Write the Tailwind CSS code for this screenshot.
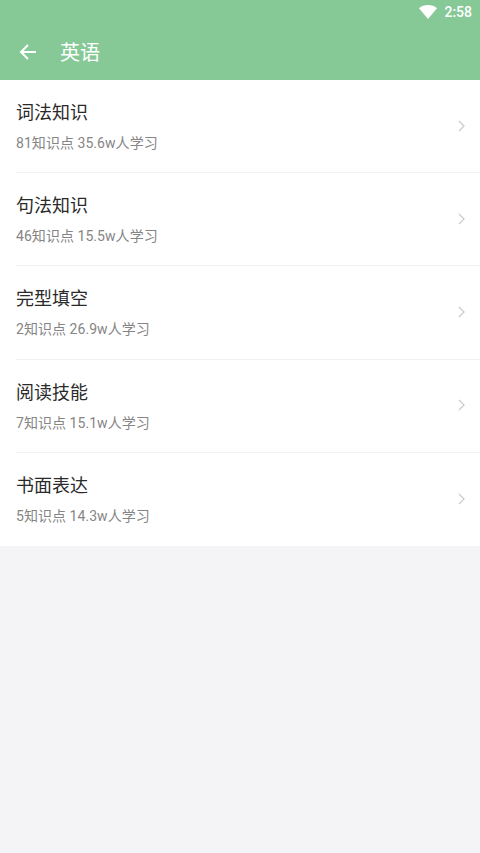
<!DOCTYPE html>
<html lang="zh-CN">
<head>
    <meta charset="UTF-8">
    <meta name="viewport" content="width=device-width, initial-scale=1.0">
    <title>英语</title>
    <script src="https://cdn.jsdelivr.net/npm/@tailwindcss/browser@4"></script>
</head>
<body class="bg-[#f4f4f6] min-h-screen font-['Roboto','Noto_Sans_CJK_SC',sans-serif]">

    <!-- Header -->
    <header class="bg-[#86c997] h-20 flex flex-col text-white">
        <div class="h-6 flex items-center justify-end pr-2 gap-[7px]">
            <svg class="w-[18px] h-[14px]" viewBox="0 0 18 14"><path d="M0 3.2C2.4 1.2 5.5 0 9 0s6.600 1.200 9 3.200L9 14z" fill="#fff"/></svg>
            <span class="text-sm font-medium leading-none">2:58</span>
        </div>
        <div class="flex-1 flex items-center pl-[19px]">
            <svg class="w-[18px] h-[18px]" viewBox="0 0 18 18" fill="none" stroke="#fff" stroke-width="2"><path d="M17 9H2M9 2 2 9l7 7"/></svg>
            <h1 class="ml-[23px] mt-px text-xl leading-none">英语</h1>
        </div>
    </header>

    <!-- List -->
    <main class="bg-white">
        <a class="h-[93.2px] pl-4 flex items-center justify-between">
            <div class="flex-1 h-full border-b border-[#f2f2f2] flex items-center justify-between pr-[15px]">
                <div class="mt-[2px]">
                    <h3 class="text-lg leading-6 text-[#2a2a2a]">词法知识</h3>
                    <p class="text-sm leading-5 tracking-[0.05px] text-[#858585] mt-[8px]">81知识点 35.6w人学习</p>
                </div>
                <svg class="w-[7px] h-[12px] mb-px" viewBox="0 0 7 12" fill="none" stroke="#cccccc" stroke-width="1.300"><path d="M1 1l5 5-5 5"/></svg>
            </div>
        </a>
        <a class="h-[93.2px] pl-4 flex items-center justify-between">
            <div class="flex-1 h-full border-b border-[#f2f2f2] flex items-center justify-between pr-[15px]">
                <div class="mt-[2px]">
                    <h3 class="text-lg leading-6 text-[#2a2a2a]">句法知识</h3>
                    <p class="text-sm leading-5 tracking-[0.05px] text-[#858585] mt-[8px]">46知识点 15.5w人学习</p>
                </div>
                <svg class="w-[7px] h-[12px] mb-px" viewBox="0 0 7 12" fill="none" stroke="#cccccc" stroke-width="1.300"><path d="M1 1l5 5-5 5"/></svg>
            </div>
        </a>
        <a class="h-[93.2px] pl-4 flex items-center justify-between">
            <div class="flex-1 h-full border-b border-[#f2f2f2] flex items-center justify-between pr-[15px]">
                <div class="mt-[2px]">
                    <h3 class="text-lg leading-6 text-[#2a2a2a]">完型填空</h3>
                    <p class="text-sm leading-5 tracking-[0.05px] text-[#858585] mt-[8px]">2知识点 26.9w人学习</p>
                </div>
                <svg class="w-[7px] h-[12px] mb-px" viewBox="0 0 7 12" fill="none" stroke="#cccccc" stroke-width="1.300"><path d="M1 1l5 5-5 5"/></svg>
            </div>
        </a>
        <a class="h-[93.2px] pl-4 flex items-center justify-between">
            <div class="flex-1 h-full border-b border-[#f2f2f2] flex items-center justify-between pr-[15px]">
                <div class="mt-[2px]">
                    <h3 class="text-lg leading-6 text-[#2a2a2a]">阅读技能</h3>
                    <p class="text-sm leading-5 tracking-[0.05px] text-[#858585] mt-[8px]">7知识点 15.1w人学习</p>
                </div>
                <svg class="w-[7px] h-[12px] mb-px" viewBox="0 0 7 12" fill="none" stroke="#cccccc" stroke-width="1.300"><path d="M1 1l5 5-5 5"/></svg>
            </div>
        </a>
        <a class="h-[93.2px] pl-4 flex items-center justify-between">
            <div class="flex-1 h-full flex items-center justify-between pr-[15px]">
                <div class="mt-[2px]">
                    <h3 class="text-lg leading-6 text-[#2a2a2a]">书面表达</h3>
                    <p class="text-sm leading-5 tracking-[0.05px] text-[#858585] mt-[8px]">5知识点 14.3w人学习</p>
                </div>
                <svg class="w-[7px] h-[12px] mb-px" viewBox="0 0 7 12" fill="none" stroke="#cccccc" stroke-width="1.300"><path d="M1 1l5 5-5 5"/></svg>
            </div>
        </a>
    </main>

</body>
</html>
